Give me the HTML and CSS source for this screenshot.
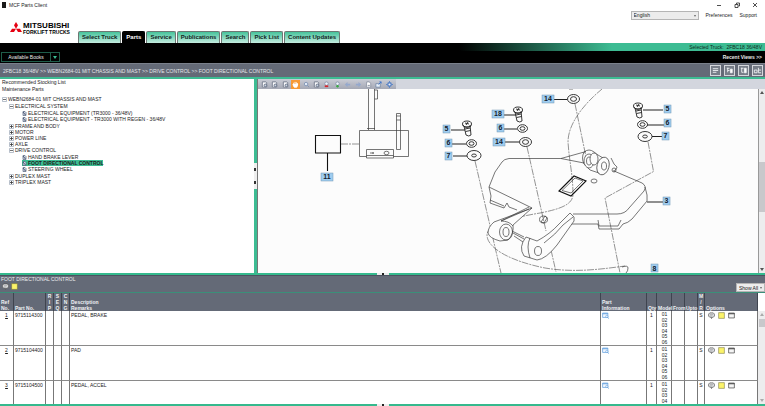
FILE: index.html
```html
<!DOCTYPE html>
<html lang="en">
<head>
    <meta charset="UTF-8">
    <meta name="viewport" content="width=device-width, initial-scale=1.0">
    <title>MCF Parts Client</title>
    <link rel="stylesheet" href="styles.css">
</head>
<body>
    <!-- Shared icons -->
    <svg class="defs" aria-hidden="true">
        <symbol id="i-page" viewBox="0 0 8 8"><path d="M1.500 1h4l1 1v5h-5z" fill="#fafbfd" stroke="#70798c"/><circle cx="5" cy="5" r="1.500" fill="#cbd6e6" stroke="#4c566b" stroke-width=".8"/></symbol>
        <symbol id="i-hand" viewBox="0 0 8 8"><path d="M2 4V2M3.500 4V1M5 4V1.500M6.300 4.500V2.500M1 4l1.500 3h3l1-3z" fill="#fff" stroke="#fff" stroke-width="1.100"/></symbol>
        <symbol id="i-zoom" viewBox="0 0 8 8"><circle cx="3.500" cy="3.500" r="2" fill="#dfe9f6" stroke="#7f93b5"/><path d="M5 5l2 2" stroke="#7f93b5"/></symbol>
        <symbol id="i-minus" viewBox="0 0 8 8"><circle cx="4" cy="3" r="2" fill="#eef3fa" stroke="#8795ad"/><path d="M2 6h4" stroke="#d4262c" stroke-width="2"/></symbol>
        <symbol id="i-plus" viewBox="0 0 8 8"><circle cx="4" cy="3" r="2" fill="#eef3fa" stroke="#8795ad"/><path d="M2.500 6h3M4 4.500v3" stroke="#3aa845" stroke-width="1.500"/></symbol>
        <symbol id="i-prev" viewBox="0 0 8 8"><path d="M1 4l3-3v2h3v2H4v2z" fill="#94a8cd"/></symbol>
        <symbol id="i-next" viewBox="0 0 8 8"><path d="M7 4L4 1v2H1v2h3v2z" fill="#94a8cd"/></symbol>
        <symbol id="i-print" viewBox="0 0 8 8"><path d="M2 1h3l1.500 2v4H1.500z" fill="#fff" stroke="#7c8597" stroke-width=".8"/><path d="M3 5h2.500" stroke="#7c8597"/></symbol>
        <symbol id="i-export" viewBox="0 0 8 8"><path d="M1 3h5v4H1z" fill="#e9f0fa" stroke="#68809f" stroke-width=".8"/><path d="M4 4l3-3M5 1h2v2" fill="none" stroke="#3d74ca"/></symbol>
        <symbol id="i-gear" viewBox="0 0 8 8"><circle cx="4" cy="4" r="2" fill="#e9f0fa" stroke="#5681c5" stroke-width="1.500"/><path d="M4 0v1.500M4 6.500V8M0 4h1.500M6.500 4H8" stroke="#5681c5"/></symbol>
        <symbol id="i-note" viewBox="0 0 8 8"><path d="M2 1h4l1.500 1.500v2L6 6H5L4 7.500V6H2L.5 4.500v-2z" fill="#dcdee0" stroke="#555" stroke-width=".8"/><path d="M2 3h4M2 4.500h3" stroke="#8a8c90" stroke-width=".6"/></symbol>
        <symbol id="i-sticky" viewBox="0 0 8 8"><path d="M.7.7h6.600v6.600H.7z" fill="#fbf36a" stroke="#6f6c3a" stroke-width=".6"/></symbol>
        <symbol id="i-card" viewBox="0 0 8 8"><path d="M.7 1.200h6.600v5.600H.7z" fill="#f5f5f5" stroke="#444" stroke-width=".8"/><path d="M.7 2h6.600" stroke="#333"/></symbol>
        <symbol id="i-info" viewBox="0 0 8 8"><path d="M.7 1.200h6v5h-6z" fill="#f2f8ff" stroke="#5a9bdc" stroke-width=".8"/><path d="M.7 2h6" stroke="#5a9bdc"/><circle cx="5.500" cy="5" r="1.300" fill="#fff" stroke="#5a9bdc" stroke-width=".7"/><path d="M6.500 6L7.500 7.500" stroke="#5a9bdc"/></symbol>
        <symbol id="i-open" viewBox="0 0 5 5"><path d="M.5.5h4v4h-4z" fill="#fff" stroke="#9aa5b5" stroke-width=".7"/><path d="M1 2.500h3" stroke="#333" stroke-width=".7"/></symbol>
        <symbol id="i-closed" viewBox="0 0 5 5"><path d="M.5.5h4v4h-4z" fill="#fff" stroke="#9aa5b5" stroke-width=".7"/><path d="M1 2.500h3M2.500 1v3" stroke="#333" stroke-width=".8"/></symbol>
        <symbol id="i-leaf" viewBox="0 0 5 5"><path d="M1 .5h2l1 1v3H1z" fill="#cfd6e4" stroke="#55617c" stroke-width=".7"/><path d="M1 1l2.500 3" stroke="#34415f" stroke-width=".8"/></symbol>
    </svg>

    <header class="top">
        <div class="titlebar">
            <span class="app-icon"></span>
            <span>MCF Parts Client</span>
            <div class="window-buttons">
                <button aria-label="Minimize"><svg viewBox="0 0 6 6"><path d="M1 3.500h4"/></svg></button>
                <button aria-label="Restore"><svg viewBox="0 0 6 6"><path d="M1 2.500h3v3H1zM2.500 2V1H5.500v3H4.500"/></svg></button>
                <button aria-label="Close"><svg viewBox="0 0 6 6"><path d="M1 1l4 4M5 1L1 5"/></svg></button>
            </div>
        </div>
        <div class="utility">
            <div class="select language">
                <select aria-label="Language"><option>English</option></select>
            </div>
            <a href="#">Preferences</a>
            <a href="#">Support</a>
        </div>
        <div class="brand-row">
            <div class="logo">
                <svg viewBox="0 0 12 10" aria-hidden="true"><path d="M6 0l2 3.300-2 3.400-2-3.400zM0 10l2-3.300h4L4 10zM12 10l-2-3.300H6L8 10z" fill="#e60012"/></svg>
                <div class="logo-text">
                    <strong>MITSUBISHI</strong>
                    <span>FORKLIFT TRUCKS</span>
                </div>
            </div>
            <nav class="tabs">
                <a href="#">Select Truck</a>
                <a href="#" class="active">Parts</a>
                <a href="#">Service</a>
                <a href="#">Publications</a>
                <a href="#">Search</a>
                <a href="#">Pick List</a>
                <a href="#">Content Updates</a>
            </nav>
        </div>
    </header>

    <div class="truck-bar">Selected Truck:&nbsp; 2FBC18 36/48V</div>

    <div class="books-bar">
        <div class="books">
            <button class="books-name">Available Books</button>
            <button class="books-arrow" aria-label="Open book list"></button>
        </div>
        <a href="#">Recent Views &gt;&gt;</a>
    </div>

    <div class="crumbs">
        <span>2FBC18 36/48V &gt;&gt; WEBN2684-01 MIT CHASSIS AND MAST &gt;&gt; DRIVE CONTROL &gt;&gt; FOOT DIRECTIONAL CONTROL</span>
        <div class="view-buttons">
            <button aria-label="List view"><svg viewBox="0 0 10 10"><path d="M2 3h6M2 5h6M2 7h4"/></svg></button>
            <button aria-label="Tree and list"><svg viewBox="0 0 10 10"><path d="M2 2.500h3M3 2v5M3 5h2"/><path d="M6 3.500h2v4H6z" class="solid"/></svg></button>
            <button aria-label="Tree and picture"><svg viewBox="0 0 10 10"><path d="M2 2.500h3M3 2v5M3 7h2"/><path d="M6 2.500h2v5H6z" class="solid"/></svg></button>
            <button aria-label="Picture view"><svg viewBox="0 0 10 10"><path d="M1.500 4.500h3v3h-3zM6 2v5.500h3M6 4.500h3"/></svg></button>
        </div>
    </div>

    <main class="work">
        <aside class="tree-pane">
            <a href="#">Recommended Stocking List</a>
            <a href="#">Maintenance Parts</a>
            <ul class="tree">
                <li><a href="#"><svg><use href="#i-open"/></svg>WEBN2684-01 MIT CHASSIS AND MAST</a>
                    <ul>
                        <li><a href="#"><svg><use href="#i-open"/></svg>ELECTRICAL SYSTEM</a>
                            <ul class="leaves">
                                <li><a href="#"><svg><use href="#i-leaf"/></svg>ELECTRICAL EQUIPMENT (TR3000 - 36/48V)</a></li>
                                <li><a href="#"><svg><use href="#i-leaf"/></svg>ELECTRICAL EQUIPMENT - TR3000 WITH REGEN - 36/48V</a></li>
                            </ul>
                        </li>
                        <li><a href="#"><svg><use href="#i-closed"/></svg>FRAME AND BODY</a></li>
                        <li><a href="#"><svg><use href="#i-closed"/></svg>MOTOR</a></li>
                        <li><a href="#"><svg><use href="#i-closed"/></svg>POWER LINE</a></li>
                        <li><a href="#"><svg><use href="#i-closed"/></svg>AXLE</a></li>
                        <li><a href="#"><svg><use href="#i-open"/></svg>DRIVE CONTROL</a>
                            <ul class="leaves">
                                <li><a href="#"><svg><use href="#i-leaf"/></svg>HAND BRAKE LEVER</a></li>
                                <li><a href="#" class="selected"><svg><use href="#i-leaf"/></svg>FOOT DIRECTIONAL CONTROL</a></li>
                                <li><a href="#"><svg><use href="#i-leaf"/></svg>STEERING WHEEL</a></li>
                            </ul>
                        </li>
                        <li><a href="#"><svg><use href="#i-closed"/></svg>DUPLEX MAST</a></li>
                        <li><a href="#"><svg><use href="#i-closed"/></svg>TRIPLEX MAST</a></li>
                    </ul>
                </li>
            </ul>
        </aside>

        <div class="divider"><span class="grip"><i></i><i></i></span></div>

        <section class="viewer">
            <div class="toolbar">
                <div class="tools">
                    <button aria-label="Fit page"><svg><use href="#i-page"/></svg></button>
                    <button aria-label="Fit width"><svg><use href="#i-page"/></svg></button>
                    <button aria-label="Fit height"><svg><use href="#i-page"/></svg></button>
                    <button aria-label="Pan" class="on"><svg><use href="#i-hand"/></svg></button>
                    <button aria-label="Zoom"><svg><use href="#i-zoom"/></svg></button>
                    <button aria-label="Zoom area"><svg><use href="#i-page"/></svg></button>
                    <button aria-label="Zoom out"><svg><use href="#i-minus"/></svg></button>
                    <button aria-label="Zoom in"><svg><use href="#i-plus"/></svg></button>
                    <button aria-label="Previous"><svg><use href="#i-prev"/></svg></button>
                    <button aria-label="Next"><svg><use href="#i-next"/></svg></button>
                    <button aria-label="Print"><svg><use href="#i-print"/></svg></button>
                    <button aria-label="Export"><svg><use href="#i-export"/></svg></button>
                    <button aria-label="Settings"><svg><use href="#i-gear"/></svg></button>
                </div>
            </div>
            <div class="canvas">
                <svg class="diagram" viewBox="258 89 500 184" preserveAspectRatio="xMidYMin slice">
                    <g class="lines">
                        <!-- control box -->
                        <path class="bold" d="M315.500 135.500h25v17.500h-25zM327.500 153v18"/>
                        <path class="dash" d="M341 144h18"/>
                        <path d="M359.500 130.500h49v26h-15M359.500 130.500v26h7M366.500 149.500h27v8.500h-27zM366.500 155.500h27M367 128.500h8"/>
                        <path d="M368.500 89v41M374.500 89v41M374.500 90h3v9h-3M396.500 113.500h4v36h-4zM396.500 120h4M396.500 116h4"/>
                        <ellipse cx="386.500" cy="153" rx="2.500" ry="1.700"/><path d="M371 152v2M373 152v2M372 153h2"/>

                        <!-- assembly lines -->
                        <g class="dash">
                            <path d="M475 161L501 273M527 147L546 231M551 250L556 272M575 104L586 157"/>
                            <path d="M648 142L653.500 171.500 605 198 620 273"/>
                            <path d="M602 89C585 103 568 123 568 142C569 160 573 175 573 195C572 205 560 209 540 213C510 218 487 225 487 235C487 248 510 261 545 268C575 273 602 269 625 266"/>
                        </g>
                        <path d="M622 267q6-2 6 1q0 3-2 5M569 89h4"/>

                        <!-- base plate -->
                        <path d="M489 187L495 172L502 162Q504 159 509 158.500H561L586 151.500M561 158.500L584 163"/>
                        <path d="M489 187L532 208M489 187l2 9-1 7 14 5 3-5 2 4 8 3M490 200l14 6"/>
                        <path d="M614 171L642 183Q647 186 644 191L629 208Q625 214 617 214H573M645 187l2 8v6L632 219Q628 223 623 224L619 229H599L598 224H571M598 220l1 6h19l3-6"/>
                        <path class="bold" d="M559 191L574 176L586 181L571 196z"/>
                        <path d="M562 190.500L575 178l8 3L571 193z"/>
                        <ellipse cx="543.500" cy="219.500" rx="4" ry="3.500"/><path d="M541 222l4-6 2 2-3 5z"/>
                        <ellipse cx="594" cy="181" rx="3" ry="2"/>

                        <!-- pivots -->
                        <path d="M584 152q5-4 10 0l4 3 5 3M584 152q-3 6 0 12l6 6 12 4M611 158l3 6 3 3q-1 4-4 4"/>
                        <ellipse class="fill" cx="589" cy="161" rx="5" ry="7"/><ellipse cx="589" cy="161" rx="2.500" ry="4"/>
                        <ellipse class="fill" cx="594" cy="159" rx="4" ry="6"/>
                        <ellipse class="fill" cx="603" cy="166" rx="6" ry="9" transform="rotate(15 603 166)"/><ellipse cx="604" cy="166" rx="2.500" ry="4"/>
                        <circle cx="614" cy="170" r="2"/>

                        <!-- pedal arms -->
                        <path class="fill" d="M532 208L494 222Q488 227 488 233Q489 238 500 241L508 240Q514 234 513 225z"/>
                        <path d="M529 209L501 221Q509 221 513 226M501 221l28-14"/>
                        <ellipse cx="506" cy="232" rx="6.500" ry="8"/><ellipse cx="506" cy="232" rx="3" ry="4.500"/>
                        <path d="M513 233l11 6M514 236l9 6M512 231l12 6"/>
                        <path class="fill" d="M524 256Q518 247 526 237L537 241Q550 234 559 224L570 213L574 217V221L557 245Q546 259 537 260z"/>
                        <path d="M544 243Q556 234 563 225L573 217M530 238q-4 8 0 20"/>
                        <ellipse cx="538" cy="251" rx="3.500" ry="4.500"/>
                    </g>

                    <!-- screws and washers -->
                    <g class="hardware">
                        <g id="screw"><path d="M464 126l2 9q3 2 5 0l-1-10M465 129l5-1M465.500 131.500l5-1"/><ellipse cx="467" cy="124" rx="4.500" ry="3"/><path d="M463 125q2 4 8 1M465 123l4 1M468 122l-2 3"/></g>
                        <use href="#screw" x="51" y="-14"/>
                        <use href="#screw" x="171" y="-18"/>
                        <g id="washer"><ellipse cx="471.500" cy="143.500" rx="5" ry="3.800"/><ellipse cx="471.500" cy="143.500" rx="2.500" ry="1.800"/></g>
                        <use href="#washer" x="51" y="-15"/>
                        <use href="#washer" x="171" y="-19"/>
                        <g id="wide"><ellipse cx="474" cy="155.500" rx="7" ry="5"/><ellipse cx="474" cy="155.500" rx="2.300" ry="1.500"/></g>
                        <use href="#wide" x="171" y="-19"/>
                        <g id="ring"><ellipse cx="525.500" cy="142" rx="6" ry="4.500"/><ellipse cx="525.500" cy="142" rx="3" ry="2.300"/></g>
                        <use href="#ring" x="48" y="-43"/>
                    </g>

                    <path class="leader" d="M451 130h14M452 144h14M453 156h14M504 115h12M504 129h13M505 142h14M554 99.500h13M643 110h20M647 125h17M652 136.500h10M647 202h16"/>

                    <g class="marks">
                        <rect x="321" y="173" width="12" height="8"/><text x="327" y="179.500">11</text>
                        <rect x="443" y="125" width="7" height="8"/><text x="446.500" y="131.500">5</text>
                        <rect x="445" y="139" width="7" height="8"/><text x="448.500" y="145.500">6</text>
                        <rect x="445" y="152" width="7" height="8"/><text x="448.500" y="158.500">7</text>
                        <rect x="492" y="110" width="12" height="8"/><text x="498" y="116.500">18</text>
                        <rect x="497" y="124" width="7" height="8"/><text x="500.500" y="130.500">6</text>
                        <rect x="493" y="138" width="12" height="8"/><text x="499" y="144.500">14</text>
                        <rect x="542" y="95" width="12" height="8"/><text x="548" y="101.500">14</text>
                        <rect x="664" y="105" width="7" height="8"/><text x="667.500" y="111.500">5</text>
                        <rect x="664" y="119" width="7" height="8"/><text x="667.500" y="125.500">6</text>
                        <rect x="662" y="132" width="7" height="8"/><text x="665.500" y="138.500">7</text>
                        <rect x="663" y="197" width="7" height="8"/><text x="666.500" y="203.500">3</text>
                        <rect x="651" y="264" width="7" height="8"/><text x="654.500" y="270.500">8</text>
                    </g>
                </svg>
                <div class="scroll"><span class="thumb"></span></div>
            </div>
        </section>
    </main>

    <div class="split"><span></span></div>

    <section class="parts">
        <div class="parts-head">
            <div>
                <h1>FOOT DIRECTIONAL CONTROL</h1>
                <div class="parts-icons">
                    <svg><use href="#i-note"/></svg>
                    <svg><use href="#i-sticky"/></svg>
                </div>
            </div>
            <div class="select show">
                <select aria-label="Show"><option>Show All</option></select>
            </div>
        </div>
        <div class="parts-body">
            <table>
                <colgroup>
                    <col class="c-ref"><col class="c-no"><col class="c-flag"><col class="c-flag"><col class="c-flag"><col>
                    <col class="c-info"><col class="c-qty"><col class="c-model"><col class="c-from"><col class="c-from"><col class="c-mr"><col class="c-opt">
                </colgroup>
                <thead>
                    <tr>
                        <th>Ref<br>No.</th><th>Part No.</th><th class="mid">R<br>I<br>P</th><th class="mid">S<br>E<br>Q</th><th class="mid">C<br>N<br>G</th>
                        <th>Description<br>Remarks</th><th>Part<br>Information</th><th>Qty</th><th>Model</th><th>From</th><th>Upto</th><th class="mid">M<br>/<br>R</th><th>Options</th>
                    </tr>
                </thead>
                <tbody>
                    <tr>
                        <td class="mid"><a href="#">1</a></td><td>9715114300</td><td></td><td></td><td></td><td>PEDAL, BRAKE</td>
                        <td><button aria-label="Part information"><svg><use href="#i-info"/></svg></button></td><td class="mid">1</td>
                        <td><ul class="models"><li>01</li><li>02</li><li>03</li><li>04</li><li>05</li><li>06</li></ul></td>
                        <td></td><td></td><td class="mid">S</td>
                        <td><div class="options"><button aria-label="Comment"><svg><use href="#i-note"/></svg></button><button aria-label="Note"><svg><use href="#i-sticky"/></svg></button><button aria-label="Details"><svg><use href="#i-card"/></svg></button></div></td>
                    </tr>
                    <tr>
                        <td class="mid"><a href="#">2</a></td><td>9715104400</td><td></td><td></td><td></td><td>PAD</td>
                        <td><button aria-label="Part information"><svg><use href="#i-info"/></svg></button></td><td class="mid">1</td>
                        <td><ul class="models"><li>01</li><li>02</li><li>03</li><li>04</li><li>05</li><li>06</li></ul></td>
                        <td></td><td></td><td class="mid">S</td>
                        <td><div class="options"><button aria-label="Comment"><svg><use href="#i-note"/></svg></button><button aria-label="Note"><svg><use href="#i-sticky"/></svg></button><button aria-label="Details"><svg><use href="#i-card"/></svg></button></div></td>
                    </tr>
                    <tr>
                        <td class="mid"><a href="#">3</a></td><td>9715104500</td><td></td><td></td><td></td><td>PEDAL, ACCEL</td>
                        <td><button aria-label="Part information"><svg><use href="#i-info"/></svg></button></td><td class="mid">1</td>
                        <td><ul class="models"><li>01</li><li>02</li><li>03</li><li>04</li></ul></td>
                        <td></td><td></td><td class="mid">S</td>
                        <td><div class="options"><button aria-label="Comment"><svg><use href="#i-note"/></svg></button><button aria-label="Note"><svg><use href="#i-sticky"/></svg></button><button aria-label="Details"><svg><use href="#i-card"/></svg></button></div></td>
                    </tr>
                </tbody>
            </table>
            <div class="scroll table-scroll"><span class="thumb"></span></div>
        </div>
    </section>

    <div class="split"><span></span></div>
</body>
</html>
```
FILE: styles.css
```css
* {
    box-sizing: border-box;
}

body {
    margin: 0;
    height: 100vh;
    display: flex;
    flex-direction: column;
    overflow: hidden;
    background-color: white;
    color: #1c1c1c;
    font-family: "Liberation Sans", Arial, sans-serif;
    font-size: 5px;
    line-height: 6px;
}

a {
    color: inherit;
    text-decoration: none;
}

ul {
    list-style: none;
    margin: 0;
    padding: 0;
}

button {
    display: block;
    margin: 0;
    padding: 0;
    border: 0;
    background: none;
    color: inherit;
    font: inherit;
}

svg {
    display: block;
}

.defs {
    display: none;
}

/* Header */
.titlebar {
    display: flex;
    align-items: center;
    gap: 3px;
    height: 10px;
    padding: 0 7px 0 2px;
}

.app-icon {
    width: 4px;
    height: 6px;
    background-color: #1a1a1a;
}

.window-buttons {
    display: flex;
    gap: 12px;
    margin-left: auto;
}

.window-buttons svg {
    width: 6px;
    height: 6px;
    fill: none;
    stroke: #222;
    stroke-width: 0.8;
}

.utility {
    display: flex;
    justify-content: flex-end;
    align-items: center;
    gap: 7px;
    height: 10px;
    padding-right: 8px;
}

.select {
    position: relative;
}

.select::after {
    content: "";
    position: absolute;
    right: 3px;
    top: 4px;
    border: 1px solid transparent;
    border-top: 2px solid #666;
}

.select select {
    display: block;
    appearance: none;
    width: 100%;
    height: 9px;
    margin: 0;
    padding: 0 2px;
    border: 1px solid #b5b5b5;
    border-radius: 0;
    background-color: #ececec;
    color: #222;
    font: inherit;
}

.language {
    width: 68px;
}

.brand-row {
    display: flex;
    gap: 9px;
    height: 23px;
    padding-left: 10px;
}

.logo {
    display: flex;
    gap: 1px;
    padding-top: 2px;
}

.logo svg {
    width: 12px;
    height: 10px;
}

.logo-text {
    display: flex;
    flex-direction: column;
    width: 46px;
    color: black;
}

.logo-text strong {
    font-size: 8px;
    line-height: 8px;
    font-weight: 900;
}

.logo-text span {
    font-size: 5px;
    line-height: 5px;
    font-weight: bold;
    white-space: nowrap;
}

.tabs {
    display: flex;
    align-items: flex-end;
    gap: 1px;
}

.tabs a {
    padding: 0 3px;
    border: 1px solid #6d7773;
    border-bottom: 0;
    border-radius: 2px 2px 0 0;
    background: linear-gradient(#46c39b, #c4ecdf);
    color: #10261f;
    font-size: 6px;
    font-weight: bold;
    line-height: 11px;
    white-space: nowrap;
}

.tabs .active {
    background: black;
    border-color: black;
    color: white;
}

/* Bars under the tabs */
.truck-bar {
    height: 8px;
    padding-right: 3px;
    background: linear-gradient(to right, black 60%, #3dbc93 80%);
    color: #0e2c22;
    line-height: 8px;
    text-align: right;
}

.books-bar {
    display: flex;
    justify-content: space-between;
    align-items: center;
    height: 12px;
    padding: 0 3px 0 1px;
    background-color: black;
    color: #e8e8e8;
    font-weight: bold;
}

.books {
    display: flex;
    height: 10px;
    border: 1px solid #1e5c49;
    font-weight: normal;
}

.books-name {
    padding: 0 6px;
    width: 48px;
    white-space: nowrap;
}

.books-arrow {
    width: 9px;
    border-left: 1px solid #1e5c49;
}

.books-arrow::after {
    content: "";
    display: block;
    width: 0;
    margin: 0 auto;
    border: 2px solid transparent;
    border-top: 3px solid #3dbc93;
    border-bottom: 0;
}

.crumbs {
    display: flex;
    justify-content: space-between;
    align-items: center;
    height: 16px;
    padding: 0 2px 0 3px;
    border-top: 1px solid #7a808b;
    border-bottom: 2px solid #3dbc93;
    background-color: #646a77;
    color: #e3e5ea;
}

.view-buttons {
    display: flex;
    gap: 3px;
}

.view-buttons button {
    border: 1px solid #d5d7dc;
    background-color: #777d88;
}

.view-buttons svg {
    width: 9px;
    height: 9px;
    fill: none;
    stroke: #eef0f3;
}

.view-buttons .solid {
    fill: white;
}

/* Tree and drawing */
.work {
    flex: 1;
    display: flex;
    min-height: 0;
}

.tree-pane {
    width: 33.2%;
    overflow: hidden;
    white-space: nowrap;
}

.tree-pane > a {
    display: block;
    padding-left: 2px;
    line-height: 7px;
}

.tree {
    padding-top: 3px;
    padding-left: 2px;
}

.tree a {
    display: flex;
    align-items: center;
    gap: 1px;
    width: max-content;
}

.tree svg {
    width: 5px;
    height: 5px;
}

.tree ul {
    padding-top: 1px;
    padding-left: 7px;
}

.tree .leaves {
    padding-bottom: 1px;
    padding-left: 13px;
}

.tree .selected {
    background-color: #3dbc93;
    font-weight: bold;
}

.divider {
    display: flex;
    align-items: center;
    width: 4px;
    border-right: 1px solid #777;
    background-color: #3dbc93;
}

.grip {
    display: flex;
    flex-direction: column;
    justify-content: space-around;
    width: 3px;
    height: 26px;
    background-color: #eee;
}

.grip i {
    width: 2px;
    height: 3px;
    background-color: #333;
}

.viewer {
    flex: 1;
    display: flex;
    flex-direction: column;
    min-width: 0;
}

.toolbar {
    height: 10px;
    background-color: #d3d6de;
}

.tools {
    display: flex;
    justify-content: space-between;
    align-items: center;
    width: 138px;
    height: 10px;
    padding: 0 2px;
    background: linear-gradient(#c9ccd5, #a5a9b5);
}

.tools button {
    padding: 1px;
}

.tools svg {
    width: 7px;
    height: 7px;
}

.tools .on {
    background-color: #f79a35;
}

.canvas {
    flex: 1;
    display: flex;
    min-height: 0;
    background-color: #fcfcfc;
}

.diagram {
    flex: 1;
    min-width: 0;
    height: 100%;
}

.lines,
.hardware {
    fill: none;
    stroke: #3c3c3c;
    stroke-width: 0.7;
}

.hardware {
    stroke: #222;
    stroke-width: 0.9;
}

.lines .bold {
    stroke: #111;
    stroke-width: 1.1;
}

.lines .fill {
    fill: #fcfcfc;
}

.lines .dash {
    stroke: #666;
    stroke-dasharray: 7 1 2 1;
}

.leader {
    fill: none;
    stroke: #222;
}

.marks rect {
    fill: #9fcdf0;
    stroke: #7397b3;
    stroke-width: 0.5;
}

.marks text {
    fill: #14202b;
    font-size: 7px;
    font-weight: bold;
    text-anchor: middle;
}

.scroll {
    display: flex;
    flex-direction: column;
    align-items: center;
    width: 7px;
    background-color: #ededee;
    border-left: 1px solid #999;
}

.scroll::before,
.scroll::after {
    content: "";
    border: 2px solid transparent;
}

.scroll::before {
    border-top: 0;
    border-bottom: 3px solid #555;
    margin: 2px 0 auto;
}

.scroll::after {
    border-bottom: 0;
    border-top: 3px solid #555;
    margin: auto 0 2px;
}

.scroll .thumb {
    width: 6px;
    height: 50px;
    margin-top: 12px;
    background-color: #c8c8cb;
}

.split {
    display: flex;
    justify-content: center;
    height: 2px;
    background-color: #35b98d;
}

.split span {
    width: 12px;
    height: 2px;
    border: 1px solid #eee;
    border-width: 0 5px;
    background-color: #222;
}

/* Parts list */
.parts-head {
    display: flex;
    justify-content: space-between;
    align-items: flex-end;
    height: 18px;
    padding-left: 1px;
    border-top: 1px solid #4c5260;
    border-bottom: 1px solid #3b8f79;
    background-color: #646a77;
    color: #eceef1;
}

.parts-head h1 {
    margin: 0;
    font-size: 5px;
    font-weight: normal;
    line-height: 7px;
}

.parts-icons {
    display: flex;
    gap: 2px;
    padding: 0 1px 2px;
}

.parts-icons svg {
    width: 7px;
    height: 7px;
}

.show {
    width: 29px;
}

.parts-body {
    display: flex;
    height: 111px;
    overflow: hidden;
}

.parts table {
    flex: 1;
    table-layout: fixed;
    width: 0;
    height: max-content;
    border-spacing: 0;
}

.c-ref { width: 14px; }
.c-no { width: 32px; }
.c-flag { width: 8px; }
.c-info { width: 46px; }
.c-qty { width: 10px; }
.c-model { width: 15px; }
.c-from { width: 13px; }
.c-mr { width: 7px; }
.c-opt { width: 53px; }

.parts th {
    height: 18px;
    padding: 0 0 0 1px;
    border-right: 1px solid #3f444f;
    background-color: #646a77;
    color: #f0f1f4;
    line-height: 6px;
    text-align: left;
    vertical-align: bottom;
    white-space: nowrap;
}

.parts td {
    height: 35px;
    padding: 1px 0 0 1px;
    border-right: 1px solid #777;
    border-bottom: 1px solid #8a8a8a;
    vertical-align: top;
    white-space: nowrap;
}

.parts .mid {
    padding-left: 0;
    text-align: center;
}

.parts td a {
    text-decoration: underline;
}

.models {
    display: flex;
    flex-direction: column;
    justify-content: space-between;
    height: 33px;
    line-height: 5px;
    text-align: center;
}

tr:last-child .models {
    height: 22px;
}

.parts td svg {
    width: 7px;
    height: 7px;
}

.options {
    display: flex;
    gap: 3px;
    padding-left: 2px;
}

.table-scroll {
    margin-top: 18px;
    border-left: 0;
}

.table-scroll .thumb {
    height: 8px;
    margin-top: 0;
}

.table-scroll::before {
    margin-bottom: 3px;
    border-bottom-color: #aaa;
}

.table-scroll::after {
    border-top-color: #aaa;
}
```
